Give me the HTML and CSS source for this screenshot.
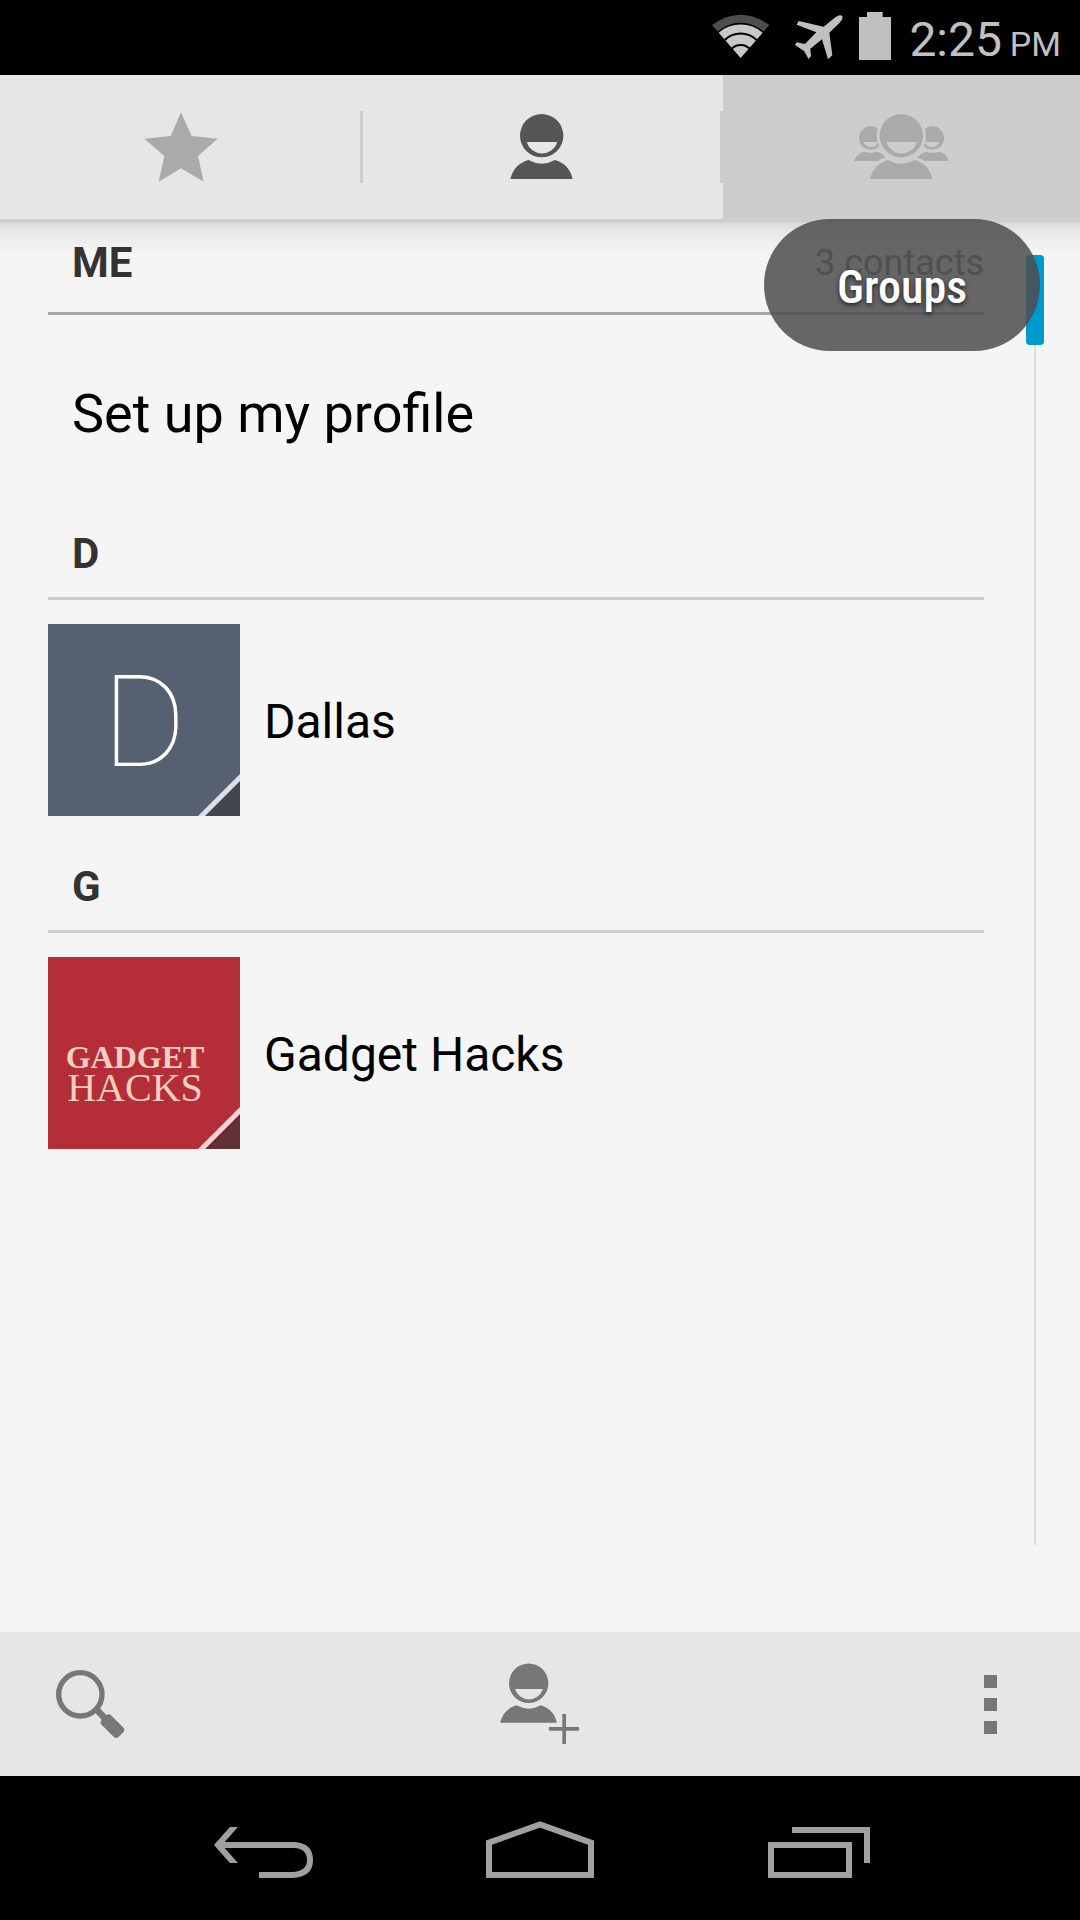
FILE: index.html
```html
<!DOCTYPE html>
<html lang="en">
<head>
<meta charset="utf-8">
<meta name="viewport" content="width=device-width, initial-scale=1">
<title>Contacts</title>
<link rel="stylesheet" href="styles.css">
</head>
<body>
<svg class="defs" aria-hidden="true">
  <symbol id="person" viewBox="-100 -70 200 210" overflow="visible">
    <path fill-rule="evenodd" d="M0-65A65 65 0 0 1 0 65A65 65 0 0 1 0-65ZM-45 19A48 48 0 0 0 47 19Z"/>
    <path d="M-94 130C-87 102-70 82-40 73Q0 95 40 73C70 82 87 102 93 130Z"/>
  </symbol>
</svg>

<header class="status">
  <svg class="status-icon wifi" viewBox="36 0 201 225" role="img" aria-label="Wi-Fi">
    <path fill="#4d4d4d" d="M122 174L36 75Q122 13 208 75Z"/>
    <path fill="#000" d="M122 174L52 95A106 106 0 0 1 192 95Z"/>
    <path fill="#c8c8c8" d="M122 174L56 98A101 101 0 0 1 188 98Z"/>
    <path fill="none" stroke="#000" stroke-width="6" d="M74 120A69 69 0 0 1 170 120M94 147A38 38 0 0 1 150 147"/>
  </svg>
  <svg class="status-icon plane" viewBox="285 0 144 225" role="img" aria-label="Airplane mode">
    <path fill="#c0c0c0" d="M406 52Q420 42 427 48Q430 56 419 68L388 98L397 166L384 178L366 118L331 146L333 168L326 177L312 153L285 135L290 127L315 132L349 97L290 74L296 63L371 80Z"/>
  </svg>
  <svg class="status-icon battery" viewBox="477 0 96 225" role="img" aria-label="Battery full">
    <path fill="#c0c0c0" d="M501 36h47v15h25v129h-96V51h24z"/>
  </svg>
  <time class="clock">2:25 <span class="meridiem">PM</span></time>
</header>

<nav class="tabs" aria-label="Sections">
  <button class="tab" aria-label="Favorites">
    <svg class="tab-icon" viewBox="36 87 297 288"><path d="M183 127L215 198L293 206L234 258L251 335L183 295L116 335L133 258L73 206L152 198Z"/></svg>
  </button>
  <button class="tab tab-current" aria-label="All contacts">
    <svg class="tab-icon" viewBox="1116 87 297 288"><use href="#person" x="1165" y="127" width="200" height="210"/></svg>
  </button>
  <button class="tab tab-pressed" aria-label="Groups">
    <svg class="tab-icon" viewBox="456 87 297 288">
      <path fill-rule="evenodd" d="M512 169A35 35 0 0 1 512 239A35 35 0 0 1 512 169ZM490 216A25 25 0 0 0 536 216ZM697 169A35 35 0 0 1 697 239A35 35 0 0 1 697 169ZM673 216A25 25 0 0 0 719 216Z"/>
      <path d="M463 273C468 257 480 247 494 245Q512 252 530 245C546 248 556 258 562 273ZM747 273C742 257 730 247 716 245Q698 252 680 245C664 248 654 258 648 273Z"/>
      <circle class="halo" cx="604" cy="197" r="74"/>
      <path class="halo" d="M502 340C506 290 530 266 566 262H642C678 266 702 290 706 340Z"/>
      <use href="#person" x="504" y="127" width="200" height="210"/>
    </svg>
  </button>
  <div class="toast" role="status">Groups</div>
</nav>

<main class="content">
  <section class="group">
    <header class="group-head group-head-me"><h2 class="group-title">ME</h2><span class="count">3 contacts</span></header>
    <a class="profile" href="#profile">Set up my profile</a>
  </section>
  <section class="group">
    <header class="group-head"><h2 class="group-title">D</h2></header>
    <a class="contact" href="#dallas">
      <span class="photo photo-letter">D
        <svg class="fold" viewBox="0 0 42 42"><path fill="#40454e" d="M42 7V42H7Z"/><path fill="#dcdfe8" d="M42 0V7L7 42H0Z"/></svg>
      </span>
      <span class="name">Dallas</span>
    </a>
  </section>
  <section class="group">
    <header class="group-head"><h2 class="group-title">G</h2></header>
    <a class="contact" href="#gadget-hacks">
      <span class="photo photo-logo">
        <span class="logo-top">GADGET</span>
        <span class="logo-bottom">HACKS</span>
        <svg class="fold" viewBox="0 0 42 42"><path fill="#613036" d="M42 7V42H7Z"/><path fill="#ffd0d4" d="M42 0V7L7 42H0Z"/></svg>
      </span>
      <span class="name">Gadget Hacks</span>
    </a>
  </section>
  <div class="scroll-track"><div class="scroll-thumb"></div></div>
</main>

<footer class="actions">
  <button class="action" aria-label="Search">
    <svg class="action-icon" viewBox="36 108 288 288">
      <circle cx="151" cy="223" r="65" fill="none" stroke="#777" stroke-width="16"/>
      <path d="M193 276L207 262L232 288L218 302Z"/>
      <rect x="-34" y="-20" width="72" height="40" rx="11" transform="translate(246 317) rotate(45)"/>
    </svg>
  </button>
  <button class="action" aria-label="Add contact">
    <svg class="action-icon" viewBox="66 48 288 288">
      <use href="#person" x="85" y="66" width="182" height="191"/>
      <path d="M277 222h11v39h39v11h-39v40h-11v-40h-40v-11h40z"/>
    </svg>
  </button>
  <button class="action" aria-label="More options">
    <svg class="action-icon" viewBox="6 408 288 288"><path d="M132 465h39v39h-39zM132 534h39v39h-39zM132 603h39v39h-39z"/></svg>
  </button>
</footer>

<nav class="system" aria-label="System">
  <button class="system-button" aria-label="Back">
    <svg class="system-icon" viewBox="42 0 360 288"><path d="M137 75L84 135L137 195M90 135H312Q360 137 360 180Q360 223 306 225H207"/><path class="mask" d="M60 60h100v21H60zM60 189h100v22H60z"/></svg>
  </button>
  <button class="system-button" aria-label="Home">
    <svg class="system-icon" viewBox="870 0 360 288"><path d="M897 128L1050 73L1203 128V225H897Z"/></svg>
  </button>
  <button class="system-button" aria-label="Recent apps">
    <svg class="system-icon" viewBox="48 0 360 288"><path d="M93 135H327V225H93ZM156 90H381V189"/></svg>
  </button>
</nav>
</body>
</html>
```
FILE: styles.css
```css
* {
  box-sizing: border-box;
}

body {
  margin: 0;
  min-height: 100vh;
  display: flex;
  flex-direction: column;
  background: #f5f5f5;
  color: #000;
  font-family: Roboto, "Noto Sans", sans-serif;
}

button {
  margin: 0;
  padding: 0;
  border: 0;
  background: none;
}

a {
  color: inherit;
  text-decoration: none;
}

svg {
  display: block;
}

.defs {
  position: absolute;
  width: 0;
  height: 0;
}

/* Status bar */
.status {
  display: flex;
  justify-content: flex-end;
  align-items: center;
  gap: 16px;
  height: 75px;
  padding-right: 19px;
  background: #000;
}

.status-icon {
  height: 75px;
}

.wifi {
  width: 67px;
}

.plane {
  width: 48px;
}

.battery {
  width: 32px;
}

.clock {
  padding: 8px 0 0 2px;
  color: #c0c0c0;
  font-size: 48px;
  line-height: 56px;
}

.meridiem {
  margin-left: -4px;
  font-size: 34px;
}

/* Tabs */
.tabs {
  position: relative;
  z-index: 1;
  display: grid;
  grid-template-columns: repeat(3, 1fr);
  height: 147px;
  border-bottom: 3px solid #cdcdcd;
  background: #e6e6e6;
}

.tab {
  position: relative;
  display: flex;
  align-items: center;
  justify-content: center;
  margin-left: 3px;
  fill: #aaa;
}

.tab + .tab::before {
  content: "";
  position: absolute;
  left: -3px;
  top: 36px;
  width: 3px;
  height: 72px;
  background: #cdcdcd;
}

.tab-current {
  fill: #555;
}

.tab-pressed {
  background: #cdcdcd;
}

.tab-icon {
  width: 99px;
  height: 96px;
}

.halo {
  fill: #cdcdcd;
}

.toast {
  position: absolute;
  top: 144px;
  right: 40px;
  width: 276px;
  height: 132px;
  border-radius: 66px;
  background: rgba(76, 76, 76, 0.85);
  color: #fff;
  font-family: "Roboto Condensed", "Liberation Sans Narrow", Roboto, sans-serif;
  font-size: 46px;
  font-weight: 500;
  line-height: 136px;
  text-align: center;
  text-shadow: 0 2px 5px rgba(0, 0, 0, 0.7);
}

/* Contact list */
.content {
  position: relative;
  flex: 1;
  padding: 0 96px 24px 48px;
}

.content::before {
  content: "";
  position: absolute;
  left: 0;
  right: 0;
  top: 0;
  height: 32px;
  background: linear-gradient(#d8d8d8, #e8e8e8 30%, #f5f5f5);
}

.group-head {
  position: relative;
  display: flex;
  align-items: center;
  justify-content: space-between;
  padding: 23px 0 19px 24px;
  border-bottom: 3px solid #cdcdcd;
}

.group-head-me {
  padding: 17px 0 25px 24px;
  border-bottom-color: #a6a6a6;
}

.group-title {
  margin: 0;
  color: #333;
  font-size: 42px;
  font-weight: 700;
  line-height: 48px;
}

.count {
  color: #646464;
  font-size: 36px;
  line-height: 48px;
}

.profile {
  display: flex;
  align-items: center;
  height: 192px;
  padding: 5px 0 0 24px;
  font-size: 54px;
  line-height: 72px;
}

.contact {
  display: flex;
  align-items: center;
  gap: 24px;
  padding: 24px 0;
}

.photo {
  position: relative;
  flex: none;
  width: 192px;
  height: 192px;
}

.photo-letter {
  background: #556070;
  color: #fff;
  font-size: 128px;
  font-weight: 100;
  line-height: 196px;
  text-align: center;
}

.photo-logo {
  display: flex;
  flex-direction: column;
  align-items: center;
  padding: 85px 18px 0 0;
  background: #b52d36;
  color: #f6cfc4;
  font-family: "Liberation Serif", serif;
}

.logo-top {
  font-size: 32px;
  font-weight: 700;
  line-height: 30px;
}

.logo-bottom {
  font-size: 40px;
  line-height: 32px;
}

.fold {
  position: absolute;
  right: 0;
  bottom: 0;
  width: 42px;
  height: 42px;
}

.name {
  padding-top: 4px;
  font-size: 48px;
  line-height: 56px;
}

.scroll-track {
  position: absolute;
  top: 33px;
  right: 36px;
  bottom: 87px;
  width: 18px;
  background: linear-gradient(#ddd, #ddd) center / 2px 100% no-repeat;
}

.scroll-thumb {
  height: 90px;
  border-radius: 4px;
  background: #0099cc;
}

/* Action bar */
.actions {
  display: flex;
  align-items: center;
  justify-content: space-between;
  height: 144px;
  padding: 0 42px;
  background: #e6e6e6;
}

.action-icon {
  width: 96px;
  height: 96px;
  fill: #777;
}

/* System navigation */
.system {
  display: flex;
  align-items: center;
  justify-content: center;
  gap: 156px;
  height: 144px;
  background: #000;
}

.system-icon {
  width: 120px;
  height: 96px;
  fill: none;
  stroke: #a0a0a0;
  stroke-width: 18px;
}

.mask {
  fill: #000;
  stroke: none;
}
```
